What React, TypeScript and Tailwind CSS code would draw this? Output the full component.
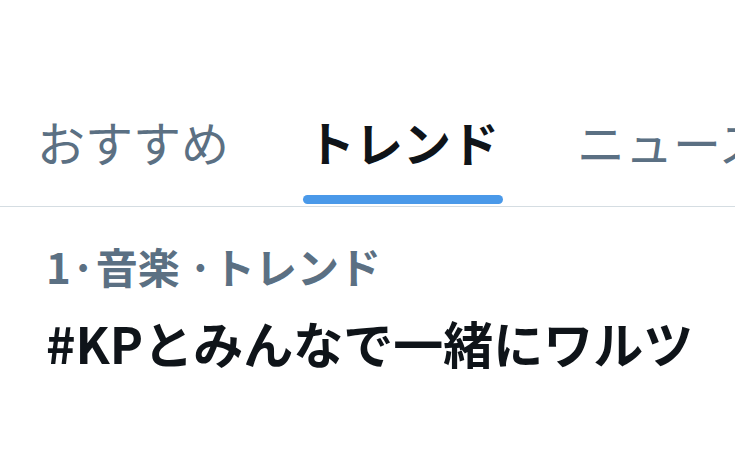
const font = { fontFamily: '"Noto Sans CJK JP", "Noto Sans", sans-serif' };

const tabs = ["おすすめ", "トレンド", "ニュース", "スポーツ"];

export default function App() {
  return (
    <div className="w-[735px] h-[471px] overflow-hidden bg-white" style={font}>
      <div className="flex h-[207px] border-b border-[#d5dde2] whitespace-nowrap">
        {tabs.map((t, i) => {
          const active = i === 1;
          return (
            <div key={t} className="flex flex-col items-center px-[37px] shrink-0">
              <span
                className={`pt-[110px] text-[48px] leading-[62px] ${
                  active ? "font-bold text-[#0f1419]" : "font-normal text-[#5b7083]"
                }`}
              >
                {t}
              </span>
              {active && <div className="mt-[23px] h-[9px] w-[200px] rounded-full bg-[#4a99e9]" />}
            </div>
          );
        })}
      </div>
      <div className="px-[46px] pt-[33px] whitespace-nowrap">
        <div className="text-[42px] leading-[52px] font-bold text-[#5b7083]">1·音楽&thinsp;·トレンド</div>
        <div className="mt-[20px] text-[50px] leading-[60px] font-bold text-[#0f1419]">
          #KPとみんなで一緒にワルツ
        </div>
      </div>
    </div>
  );
}
